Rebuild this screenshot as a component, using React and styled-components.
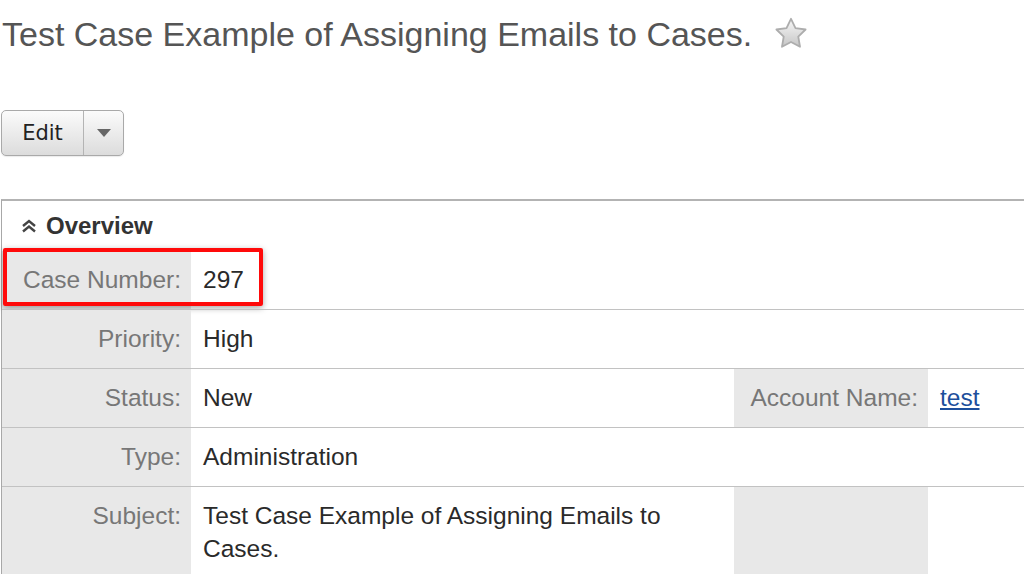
import React from "react";
import styled, { createGlobalStyle } from "styled-components";

const GlobalStyle = createGlobalStyle`
  html, body {
    margin: 0;
    padding: 0;
    background: #fff;
    overflow: hidden;
  }
  body {
    font-family: "Liberation Sans", Arial, sans-serif;
  }
`;

const Page = styled.div`
  width: 1024px;
  height: 574px;
  overflow: hidden;
`;

const TitleBar = styled.div`
  display: flex;
  align-items: center;
  gap: 22px;
  padding: 13px 0 0 2px;
  height: 41px;
`;

const Title = styled.h1`
  margin: 0;
  font-size: 34px;
  line-height: 40px;
  font-weight: normal;
  color: #555;
`;

const Toolbar = styled.div`
  display: flex;
  margin-top: 56px;
  margin-left: 1px;
`;

const SplitButton = styled.div`
  display: flex;
  height: 44px;
  border: 1px solid #a9a9a9;
  border-radius: 5px;
  background: linear-gradient(#fbfbfb, #dcdcdc);
  box-shadow: 0 1px 1px rgba(0, 0, 0, 0.08);
`;

const ButtonPart = styled.div`
  display: flex;
  align-items: center;
  justify-content: center;
  width: ${(p) => p.w}px;
  border-left: ${(p) => (p.divided ? "1px solid #b4b4b4" : "none")};
  font-family: "DejaVu Sans", sans-serif;
  font-size: 21px;
  color: #222;
`;

const Panel = styled.div`
  position: relative;
  margin-top: 43px;
  margin-left: 1px;
  border-top: 2px solid #b3b3b3;
  border-left: 1px solid #a8a8a8;
`;

const PanelHeader = styled.div`
  display: flex;
  align-items: center;
  gap: 9px;
  height: 50px;
  padding-left: 19px;
  font-size: 24px;
  font-weight: bold;
  color: #333;
`;

const Row = styled.div`
  position: relative;
  display: grid;
  grid-template-columns: 189px 543px 194px 1fr;
  border-top: ${(p) => (p.first ? "none" : "1px solid #c2c2c2")};
`;

const Label = styled.div`
  background: #e8e8e8;
  color: #777;
  text-align: right;
  font-size: 24.5px;
  line-height: 33px;
  padding: 12px 10px 13px 10px;
  min-height: 33px;
`;

const Value = styled.div`
  grid-column: span ${(p) => p.span || 1};
  color: #2a2a2a;
  font-size: 24.5px;
  line-height: 33px;
  padding: 12px 12px 13px 12px;
`;

const Link = styled.a`
  color: #1d4f9c;
  text-decoration: underline;
`;

const Highlight = styled.div`
  position: absolute;
  left: 1px;
  top: -3px;
  width: 252px;
  height: 50px;
  border: 4px solid #ff0a0a;
  border-radius: 2px;
  box-shadow: 0 2px 6px rgba(0, 0, 0, 0.35);
  pointer-events: none;
`;

const Star = () => (
  <svg width="34" height="34" viewBox="2 2 28 28">
    <defs>
      <linearGradient id="starFill" x1="0" y1="0" x2="0" y2="1">
        <stop offset="0" stopColor="#f7f7f7" />
        <stop offset="1" stopColor="#c6c6c6" />
      </linearGradient>
    </defs>
    <path
      d="M16 3.5l3.7 7.6 8.3 1.2-6 5.9 1.4 8.3L16 22.6l-7.4 3.9 1.4-8.3-6-5.9 8.3-1.2z"
      fill="url(#starFill)"
      stroke="#adadad"
      strokeWidth="1.5"
      strokeLinejoin="round"
    />
  </svg>
);

const Caret = () => (
  <svg width="14" height="8" viewBox="0 0 14 8">
    <path d="M0 0h14L7 8z" fill="#666" />
  </svg>
);

const DoubleChevron = () => (
  <svg width="16" height="14" viewBox="0 0 16 14">
    <path
      d="M2 7l6-5 6 5M2 12.5l6-5 6 5"
      fill="none"
      stroke="#444"
      strokeWidth="2.4"
    />
  </svg>
);

export default function App() {
  return (
    <Page>
      <GlobalStyle />
      <TitleBar>
        <Title>Test Case Example of Assigning Emails to Cases.</Title>
        <Star />
      </TitleBar>
      <Toolbar>
        <SplitButton>
          <ButtonPart w={81}>Edit</ButtonPart>
          <ButtonPart w={39} divided>
            <Caret />
          </ButtonPart>
        </SplitButton>
      </Toolbar>
      <Panel>
        <PanelHeader>
          <DoubleChevron />
          Overview
        </PanelHeader>
        <Row first>
          <Label>Case Number:</Label>
          <Value span={3}>297</Value>
          <Highlight />
        </Row>
        <Row>
          <Label>Priority:</Label>
          <Value span={3}>High</Value>
        </Row>
        <Row>
          <Label>Status:</Label>
          <Value>New</Value>
          <Label>Account Name:</Label>
          <Value>
            <Link href="#">test</Link>
          </Value>
        </Row>
        <Row>
          <Label>Type:</Label>
          <Value span={3}>Administration</Value>
        </Row>
        <Row>
          <Label>Subject:</Label>
          <Value>Test Case Example of Assigning Emails to Cases.</Value>
          <Label />
          <Value />
        </Row>
      </Panel>
    </Page>
  );
}
